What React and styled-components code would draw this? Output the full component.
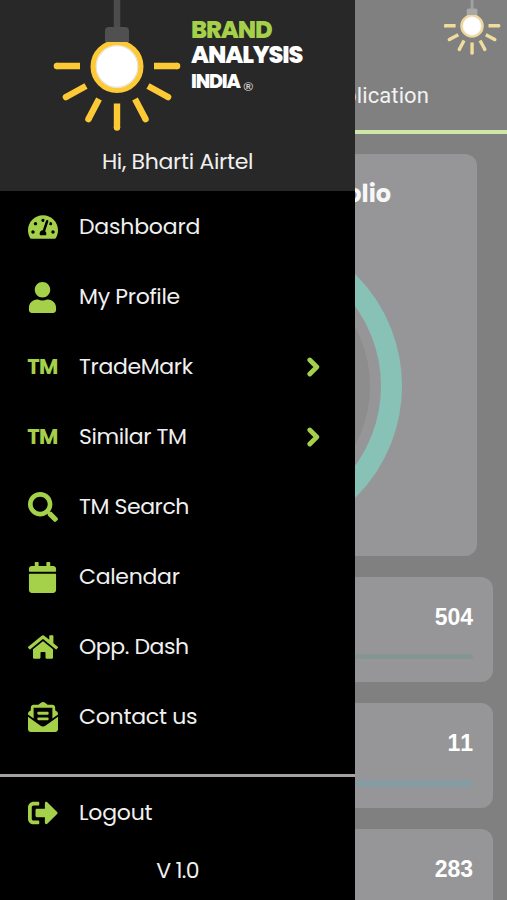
import React from 'react'
import styled, { createGlobalStyle } from 'styled-components';
import {
  FaTachometerAlt,
  FaUser,
  FaSearch,
  FaCalendar,
  FaHome,
  FaEnvelopeOpenText,
  FaSignOutAlt
} from 'react-icons/fa';

// #region STYLES
const GlobalStyle = createGlobalStyle`
  * {
    box-sizing: border-box;
  }

  body {
    margin: 0;
    background-color: #808080;
    font-family: Poppins, Inter, 'Open Sans', sans-serif;
  }
`
const Screen = styled.div`
  position: relative;
  width: 507px;
  height: 900px;
  overflow: hidden;
  background-color: #808080;
`
const Page = styled.main`
  display: flex;
  flex-direction: column;
  color: #fff;
`
const TopBar = styled.header`
  display: flex;
  flex-direction: column;
  height: 134px;
  border-bottom: 4px solid #d0e6a6;
`
const TopLogo = styled.div`
  display: flex;
  justify-content: flex-end;
  height: 56px;
  padding-right: 6px;
`
const Tab = styled.div`
  width: 429px;
  padding-top: 24px;
  font-family: Roboto, sans-serif;
  font-size: 22px;
  line-height: 32px;
  letter-spacing: 0.1px;
  text-align: right;
  color: #f2f2f2;
`
const ChartCard = styled.section`
  width: 464px;
  height: 402px;
  margin: 20px 0 0 13px;
  border-radius: 12px;
  background-color: #969698;
`
const ChartTitle = styled.h2`
  margin: 0;
  padding: 23px 86px 0 0;
  font-size: 24px;
  font-weight: 700;
  line-height: 34px;
  text-align: right;
  color: #f7f7f7;
`
const Ring = styled.svg`
  display: block;
  width: 320px;
  height: 320px;
  margin: 15px 0 0 72px;
`
const Stats = styled.section`
  display: flex;
  flex-direction: column;
  gap: 21px;
  width: 480px;
  margin: 21px 0 0 13px;
`
const StatCard = styled.div`
  display: flex;
  flex-direction: column;
  height: 105px;
  padding: 26px 20px 0;
  border-radius: 12px;
  background-color: #969698;
`
const StatValue = styled.div`
  height: 28px;
  font-family: 'Liberation Sans', Arial, sans-serif;
  font-size: 23px;
  font-weight: 700;
  font-kerning: none;
  line-height: 28px;
  text-align: right;
`
const StatBar = styled.div`
  height: ${({ $height }) => $height}px;
  margin-top: 23px;
  border-radius: 0 2px 2px 0;
  background-color: ${({ $color }) => $color};
`
const Drawer = styled.aside`
  position: absolute;
  top: 0;
  left: 0;
  display: flex;
  flex-direction: column;
  width: 355px;
  height: 900px;
  background-color: #000;
  color: #f0f0f0;
`
const DrawerHeader = styled.div`
  height: 191px;
  background-color: #282828;
`
const Brand = styled.div`
  display: flex;
  gap: 10px;
  height: 146px;
  padding-left: 53px;
`
const BrandName = styled.div`
  display: flex;
  flex-direction: column;
  padding-top: 18px;
  font-weight: 800;
  white-space: nowrap;
`
const BrandLine = styled.div`
  height: ${({ $height }) => $height}px;
  font-size: ${({ $size }) => $size}px;
  line-height: ${({ $height }) => $height}px;
  letter-spacing: ${({ $track }) => $track}px;
  color: ${({ $color }) => $color || '#fff'};
`
const Registered = styled.span`
  margin-left: 4px;
  font-family: 'Liberation Sans', Arial, sans-serif;
  font-size: 13px;
  font-weight: 700;
  vertical-align: -3px;
  color: #ccc;
`
const Greeting = styled.div`
  font-size: 22px;
  line-height: 32px;
  letter-spacing: -0.3px;
  text-align: center;
`
const Menu = styled.nav`
  display: flex;
  flex-direction: column;
  height: 586px;
  padding-top: 1px;
  border-bottom: 3px solid #a5a1a5;
`
const MenuItem = styled.a`
  display: flex;
  flex-shrink: 0;
  align-items: center;
  height: 70px;
  padding: 0 34px 0 27px;
`
const IconBox = styled.span`
  display: flex;
  justify-content: center;
  width: 31px;
  margin-right: 21px;
  color: #a4d04a;

  svg{
    display: block;
    width: ${({ $size }) => $size || 30}px;
    height: ${({ $size }) => $size || 30}px;
  }
`
const TmMark = styled.span`
  font-size: 21px;
  font-weight: 700;
  line-height: 28px;
  letter-spacing: -0.6px;
`
const Label = styled.span`
  flex: 1;
  font-size: 22px;
  line-height: 32px;
  letter-spacing: ${({ $track }) => $track || 0}px;
  white-space: nowrap;
`
const Arrow = styled.svg`
  width: 14px;
  height: 20px;
  margin-bottom: 1px;
  fill: none;
  stroke: #a4d04a;
  stroke-width: 4.8;
  stroke-linecap: round;
  stroke-linejoin: round;
`
const Footer = styled.div`
  display: flex;
  flex-direction: column;
  padding-top: 1px;
`
const Version = styled.div`
  padding-top: 7px;
  font-size: 22px;
  line-height: 32px;
  letter-spacing: -0.7px;
  text-align: center;
`
// #endregion

const menu = [
  { label: 'Dashboard', icon: <FaTachometerAlt />, track: -0.2 },
  { label: 'My Profile', icon: <FaUser />, size: 31, track: -0.3 },
  { label: 'TradeMark', icon: <TmMark>TM</TmMark>, arrow: true, track: -0.35 },
  { label: 'Similar TM', icon: <TmMark>TM</TmMark>, arrow: true, track: -0.42 },
  { label: 'TM Search', icon: <FaSearch />, track: -0.42 },
  { label: 'Calendar', icon: <FaCalendar />, size: 31, track: -0.3 },
  { label: 'Opp. Dash', icon: <FaHome />, track: -0.42 },
  { label: 'Contact us', icon: <FaEnvelopeOpenText />, track: -0.25 }
];

const stats = [
  { value: 504, color: '#84968f', height: 5 },
  { value: 11, color: '#859ca2', height: 7 },
  { value: 283, color: '#84968f', height: 5 }
];

const Bulb = ({ width, height, viewBox, ray, rayWidth, ring, cord, cap }) => (
  <svg width={width} height={height} viewBox={viewBox} fill="none">
    <path d="M64 0V28" stroke={cord} strokeWidth="6.5" />
    <circle cx="64" cy="66.5" r="23.8" fill="#fff" stroke={ring} strokeWidth="5.4" />
    <circle cx="64" cy="66.5" r="20.8" stroke="#e6e3dc" strokeWidth="1.2" />
    <path d="M52 42V31q0-4 4-4h16q4 0 4 4v11z" fill={cap} />
    <g stroke={ray} strokeWidth={rayWidth}>
      <path d="M27 66H3.500M101 66h23.500M33 86 13 97M95 86l20 11M46 99 35.500 119M82 99l10.500 20M64 103.500V128" />
      <path
        d="M4 66h-.1M124 66h.1M13 97l-.1.06M115 97l.1.06M35.500 119l-.05.1M92.500 119l.05.1M64 127.500v.1"
        strokeLinecap="round"
      />
    </g>
  </svg>
)

const App = () => {
  return (
    <Screen>
      <GlobalStyle />
      <Page>
        <TopBar>
          <TopLogo>
            <Bulb width={57} height={56} viewBox="1 8 128 126" ray="#f0dc9c" rayWidth={7.6} ring="#f0d698" cord="#a0a0a0" cap="#a8a8a8" />
          </TopLogo>
          <Tab>Application</Tab>
        </TopBar>
        <ChartCard>
          <ChartTitle>Portfolio</ChartTitle>
          <Ring viewBox="0 0 320 320">
            <circle cx="160" cy="160" r="125" fill="#8d8d8d" />
            <circle cx="160" cy="160" r="146.500" fill="none" stroke="#88c2b6" strokeWidth="21" />
          </Ring>
        </ChartCard>
        <Stats>
          {stats.map(({ value, color, height }) => (
            <StatCard key={value}>
              <StatValue>{value}</StatValue>
              <StatBar $color={color} $height={height} />
            </StatCard>
          ))}
        </Stats>
      </Page>

      <Drawer>
        <DrawerHeader>
          <Brand>
            <Bulb width={128} height={134} viewBox="0 0 128 134" ray="#fdca36" rayWidth={6.4} ring="#fdca36" cord="#4c4c4c" cap="#505050" />
            <BrandName>
              <BrandLine $size={24} $height={24} $track={-1.1} $color="#a4d04a">BRAND</BrandLine>
              <BrandLine $size={24} $height={26} $track={-1.15}>ANALYSIS</BrandLine>
              <BrandLine $size={19} $height={27} $track={-1.2}>INDIA<Registered>®</Registered></BrandLine>
            </BrandName>
          </Brand>
          <Greeting>Hi, Bharti Airtel</Greeting>
        </DrawerHeader>
        <Menu>
          {menu.map(({ label, icon, size, arrow, track }) => (
            <MenuItem key={label}>
              <IconBox $size={size}>{icon}</IconBox>
              <Label $track={track}>{label}</Label>
              {arrow && (
                <Arrow viewBox="0 0 14 20">
                  <path d="M2.800 3 9.800 10l-7 7" />
                </Arrow>
              )}
            </MenuItem>
          ))}
        </Menu>
        <Footer>
          <MenuItem>
            <IconBox><FaSignOutAlt /></IconBox>
            <Label $track={-0.2}>Logout</Label>
          </MenuItem>
          <Version>V 1.0</Version>
        </Footer>
      </Drawer>
    </Screen>
  )
}

export default App
